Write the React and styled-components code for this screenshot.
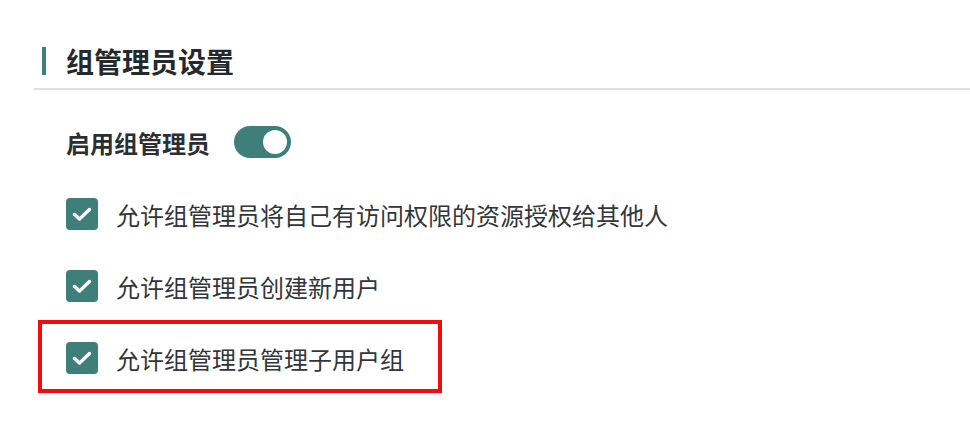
import React from "react";
import styled, { createGlobalStyle } from "styled-components";

const Global = createGlobalStyle`
  html, body { margin: 0; padding: 0; background: #ffffff; }
  body { font-family: "Noto Sans CJK SC", "Noto Sans", sans-serif; }
`;

const TEAL = "#3e7f7a";

const Page = styled.div`
  width: 970px;
  height: 442px;
  box-sizing: border-box;
  padding-left: 34px;
  overflow: hidden;
`;

const Header = styled.div`
  display: flex;
  align-items: center;
  gap: 20px;
  height: 55px;
  margin-top: 33px;
  padding-left: 8px;
  border-bottom: 2px solid #dfe0e5;
`;

const Accent = styled.span`
  width: 4px;
  height: 28px;
  background: ${TEAL};
`;

const Title = styled.h2`
  margin: 0;
  font-size: 28px;
  font-weight: 700;
  color: #24292c;
  line-height: 1;
`;

const Body = styled.div`
  display: flex;
  flex-direction: column;
  gap: 40px;
  padding: 36px 0 0 32px;
`;

const SwitchRow = styled.div`
  display: flex;
  align-items: center;
  gap: 24px;
  height: 32px;
`;

const SwitchLabel = styled.span`
  font-size: 24px;
  font-weight: 700;
  color: #2b2f33;
`;

const Toggle = styled.button`
  position: relative;
  width: 57px;
  height: 32px;
  border: none;
  padding: 0;
  border-radius: 16px;
  background: ${(p) => (p.$on ? TEAL : "#c9ccd1")};
  cursor: pointer;
  &::after {
    content: "";
    position: absolute;
    top: 4px;
    left: ${(p) => (p.$on ? "29px" : "4px")};
    width: 24px;
    height: 24px;
    border-radius: 50%;
    background: #ffffff;
  }
`;

const Option = styled.label`
  position: relative;
  display: flex;
  align-items: center;
  gap: 18px;
  height: 32px;
  font-size: 24px;
  color: #333639;
  ${(p) =>
    p.$highlight &&
    `
    &::after {
      content: "";
      position: absolute;
      top: -22px;
      bottom: -19px;
      left: -28px;
      width: 404px;
      box-sizing: border-box;
      border: 4px solid #f20d0d;
      pointer-events: none;
    }
  `}
`;

const Box = styled.span`
  flex: none;
  width: 32px;
  height: 32px;
  border-radius: 4px;
  background: ${TEAL};
  display: flex;
  align-items: center;
  justify-content: center;
`;

const Check = () => (
  <svg width="24" height="24" viewBox="0 0 24 24">
    <polyline
      points="4.5,12.5 9.5,17 19.5,7.5"
      fill="none"
      stroke="#ffffff"
      strokeWidth="3.4"
      strokeLinecap="round"
      strokeLinejoin="round"
    />
  </svg>
);

const options = [
  "允许组管理员将自己有访问权限的资源授权给其他人",
  "允许组管理员创建新用户",
  "允许组管理员管理子用户组",
];

export default function App() {
  return (
    <>
      <Global />
      <Page>
        <Header>
          <Accent />
          <Title>组管理员设置</Title>
        </Header>
        <Body>
          <SwitchRow>
            <SwitchLabel>启用组管理员</SwitchLabel>
            <Toggle $on aria-label="启用组管理员" />
          </SwitchRow>
          {options.map((t, i) => (
            <Option key={t} $highlight={i === 2}>
              <Box>
                <Check />
              </Box>
              {t}
            </Option>
          ))}
        </Body>
      </Page>
    </>
  );
}
